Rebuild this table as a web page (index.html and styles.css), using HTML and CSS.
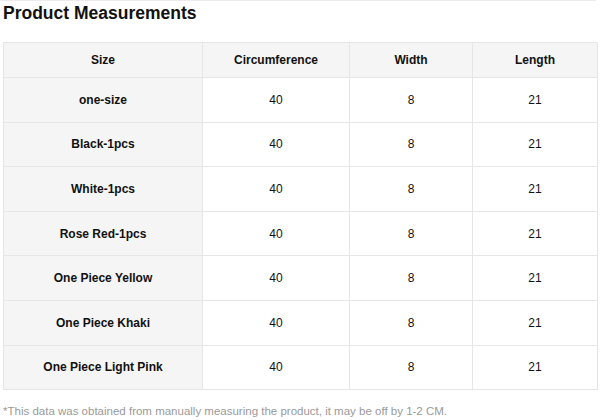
FILE: index.html
```html
<!DOCTYPE html>
<html>
<head>
<meta charset="utf-8">
<link rel="stylesheet" href="styles.css">
</head>
<body>
<div class="page">
  <h2 class="title">Product Measurements</h2>
  <table class="sizes">
    <colgroup>
      <col class="c1"><col class="c2"><col class="c3"><col class="c4">
    </colgroup>
    <thead>
      <tr><th>Size</th><th>Circumference</th><th>Width</th><th>Length</th></tr>
    </thead>
    <tbody>
      <tr><th>one-size</th><td>40</td><td>8</td><td>21</td></tr>
      <tr><th>Black-1pcs</th><td>40</td><td>8</td><td>21</td></tr>
      <tr><th>White-1pcs</th><td>40</td><td>8</td><td>21</td></tr>
      <tr><th>Rose Red-1pcs</th><td>40</td><td>8</td><td>21</td></tr>
      <tr><th>One Piece Yellow</th><td>40</td><td>8</td><td>21</td></tr>
      <tr><th>One Piece Khaki</th><td>40</td><td>8</td><td>21</td></tr>
      <tr><th>One Piece Light Pink</th><td>40</td><td>8</td><td>21</td></tr>
    </tbody>
  </table>
  <p class="note">*This data was obtained from manually measuring the product, it may be off by 1-2 CM.</p>
</div>
</body>
</html>
```
FILE: styles.css
```css
html, body {
  margin: 0;
  padding: 0;
  background: #fff;
}
body {
  font-family: "Liberation Sans", Arial, sans-serif;
  color: #111;
}
.page {
  width: 596px;
  border-top: 1px solid #ececec;
  padding: 0 3px;
  box-sizing: border-box;
}
.title {
  margin: 2px 0 0 0;
  font-size: 17.5px;
  line-height: 20px;
  font-weight: bold;
  color: #111;
  height: 39px;
}
.sizes {
  border-collapse: collapse;
  table-layout: fixed;
  width: 594px;
  font-size: 12px;
}
.c1 { width: 199px; }
.c2 { width: 147px; }
.c3 { width: 123px; }
.c4 { width: 125px; }
.sizes th, .sizes td {
  border: 1px solid #e6e6e6;
  text-align: center;
  padding: 0;
}
.sizes thead th {
  background: #f5f5f5;
  height: 34px;
  font-weight: bold;
}
.sizes tbody th {
  background: #f5f5f5;
  font-weight: bold;
  height: 43.6px;
}
.sizes tbody td {
  background: #fff;
  font-weight: normal;
  height: 43.6px;
}
.note {
  margin: 14px 0 0 0;
  font-size: 11.5px;
  line-height: 14px;
  color: #9a9a9a;
}
```
